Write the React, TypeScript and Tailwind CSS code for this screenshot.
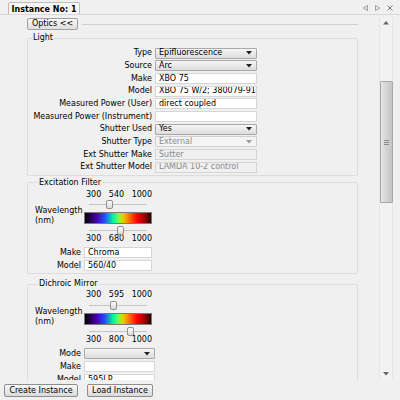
import React from 'react';

const font = { fontFamily: '"DejaVu Sans", Verdana, sans-serif' };

function Combo({ value, w = 'w-[102px]' }: { value: string; w?: string }) {
  return (
    <div
      className={`${w} flex h-[11px] items-center justify-between rounded-[1px] border border-[#a9a9a9] bg-gradient-to-b from-[#f6f6f6] to-[#dcdcdc] pl-[3px] pr-[4px] leading-none`}
    >
      <span>{value}</span>
      <svg width="6" height="4" viewBox="0 0 6 4">
        <path d="M0 0h6L3 3.5z" fill="#222" />
      </svg>
    </div>
  );
}

function DisabledCombo({ value }: { value: string }) {
  return (
    <div className="flex h-[11px] w-[102px] items-center justify-between rounded-[1px] border border-[#cfcfcf] bg-[#f4f4f4] pl-[3px] pr-[4px] leading-none text-[#8a8a8a]">
      <span>{value}</span>
      <svg width="6" height="4" viewBox="0 0 6 4">
        <path d="M0 0h6L3 3.5z" fill="#9a9a9a" />
      </svg>
    </div>
  );
}

function Field({
  value = '',
  disabled = false,
  w = 'w-[102px]',
}: {
  value?: string;
  disabled?: boolean;
  w?: string;
}) {
  return (
    <div
      className={`${w} flex h-[11px] items-center overflow-hidden whitespace-nowrap border pl-[3px] leading-none ${
        disabled
          ? 'border-[#d4d4d4] bg-[#f0f0f0] text-[#8a8a8a]'
          : 'border-[#d6d6d6] bg-white text-black'
      }`}
    >
      {value}
    </div>
  );
}

function LightRow({ label, children }: { label: string; children: React.ReactNode }) {
  return (
    <div className="flex h-[12.67px] items-center">
      <div className="w-[127px] whitespace-nowrap pr-[3px] text-right leading-none">{label}</div>
      {children}
    </div>
  );
}

function Slider({ pos }: { pos: number }) {
  return (
    <div className="relative mx-[5px] h-[9px]">
      <div className="absolute left-0 right-0 top-[4px] h-px bg-[#c4c4c4]" />
      <div
        className="absolute top-0 h-[9px] w-[7px] rounded-[2px] border border-[#8f8f8f] bg-gradient-to-b from-white to-[#d8d8d8]"
        style={{ left: `calc(${pos * 100}% - 3px)` }}
      />
    </div>
  );
}

function Spectrum() {
  return (
    <div className="h-[12px] border border-[#7a7a7a] bg-[linear-gradient(to_right,#000_0%,#2a0060_10%,#4a00b0_18%,#2050ff_30%,#00f0a0_42%,#60ff60_50%,#d0e000_56%,#ffa000_62%,#ff4800_71%,#ff0000_79%,#a00000_90%,#200000_100%)]" />
  );
}

function Numbers({ a, b, c, h = 'h-[10px]' }: { a: string; b: string; c: string; h?: string }) {
  return (
    <div className={`flex ${h} items-center justify-between pl-[2px] leading-none`}>
      <span>{a}</span>
      <span>{b}</span>
      <span>{c}</span>
    </div>
  );
}

function WavelengthBlock({ mid1, mid2, p1, p2 }: { mid1: string; mid2: string; p1: number; p2: number }) {
  return (
    <div className="flex">
      <div className="flex w-[50px] flex-col justify-center pl-[1px] leading-[10px]">
        <span>Wavelength</span>
        <span>(nm)</span>
      </div>
      <div className="flex w-[68px] flex-col">
        <Numbers a="300" b={mid1} c="1000" />
        <div className="mt-[0.5px]">
          <Slider pos={p1} />
        </div>
        <div className="mt-[3px]">
          <Spectrum />
        </div>
        <div className="mt-[2px]">
          <Slider pos={p2} />
        </div>
        <Numbers a="300" b={mid2} c="1000" h="h-[8px]" />
      </div>
    </div>
  );
}

function SmallRow({ label, children }: { label: string; children: React.ReactNode }) {
  return (
    <div className="flex h-[13px] items-center">
      <div className="w-[50px] pr-[3px] text-right leading-none">{label}</div>
      {children}
    </div>
  );
}

function Group({ title, children, className = '' }: { title: string; children: React.ReactNode; className?: string }) {
  return (
    <fieldset className={`rounded-[2px] border border-[#dcdcdc] ${className}`}>
      <legend className="ml-[4px] px-[1px] leading-none">{title}</legend>
      {children}
    </fieldset>
  );
}

function Button({ label, w }: { label: string; w: string }) {
  return (
    <button className={`${w} h-[13px] whitespace-nowrap rounded-[2px] border border-[#8e8e8e] bg-gradient-to-b from-[#f8f8f8] to-[#dadada] px-0 leading-none`}>
      {label}
    </button>
  );
}

export default function App() {
  return (
    <div className="flex h-[400px] w-[400px] flex-col overflow-hidden bg-[#f0f0f0] text-[8px] text-black" style={font}>
      {/* Tab bar */}
      <div className="flex h-[15px] items-end border-b border-[#d8d8d8] pl-[8px]">
        <div className="flex h-[12px] w-[72px] items-center justify-center rounded-t-[2px] border border-b-0 border-[#bdbdbd] bg-[#f7f7f7] pt-[2px] font-bold leading-none">
          Instance No: 1
        </div>
        <div className="flex-1" />
        <div className="mb-[3px] mr-[7px] flex items-center gap-[7px]">
          <svg width="5" height="6" viewBox="0 0 5 6">
            <path d="M4.5 0.5v5L0.5 3z" fill="none" stroke="#8a8a8a" strokeWidth="0.8" />
          </svg>
          <svg width="5" height="6" viewBox="0 0 5 6">
            <path d="M0.5 0.5v5L4.5 3z" fill="none" stroke="#8a8a8a" strokeWidth="0.8" />
          </svg>
          <svg width="6" height="6" viewBox="0 0 6 6">
            <path d="M0.5 0.5l5 5M5.5 0.5l-5 5" stroke="#7a7a7a" strokeWidth="1" />
          </svg>
        </div>
      </div>

      {/* Body */}
      <div className="flex h-[365px]">
        <div className="h-full w-[379px] overflow-hidden">
          <div className="flex items-center pl-[27px] pt-[3px]">
            <button className="h-[12px] w-[51px] rounded-[2px] border border-[#a0a0a0] bg-gradient-to-b from-[#f8f8f8] to-[#dedede] leading-none">
              Optics &lt;&lt;
            </button>
            <div className="ml-[4px] h-px w-[276px] bg-[#d0d0d0]" />
          </div>

          <div className="ml-[27px] mt-[4px] flex w-[331px] flex-col">
            <Group title="Light" className="pb-[1px] pt-[5px]">
              <div className="flex flex-col">
                <LightRow label="Type">
                  <Combo value="Epifluorescence" />
                </LightRow>
                <LightRow label="Source">
                  <Combo value="Arc" />
                </LightRow>
                <LightRow label="Make">
                  <Field value="XBO 75" />
                </LightRow>
                <LightRow label="Model">
                  <Field value="XBO 75 W/2; 380079-915" />
                </LightRow>
                <LightRow label="Measured Power (User)">
                  <Field value="direct coupled" />
                </LightRow>
                <LightRow label="Measured Power (Instrument)">
                  <Field />
                </LightRow>
                <LightRow label="Shutter Used">
                  <Combo value="Yes" />
                </LightRow>
                <LightRow label="Shutter Type">
                  <DisabledCombo value="External" />
                </LightRow>
                <LightRow label="Ext Shutter Make">
                  <Field value="Sutter" disabled />
                </LightRow>
                <LightRow label="Ext Shutter Model">
                  <Field value="LAMDA 10-2 control" disabled />
                </LightRow>
              </div>
            </Group>

            <Group title="Excitation Filter" className="mt-[3px] pb-[1px] pl-[6px]">
              <div className="pt-[3px]">
                <WavelengthBlock mid1="540" mid2="680" p1={0.343} p2={0.543} />
              </div>
              <div className="mt-[3px] flex flex-col">
                <SmallRow label="Make">
                  <Field value="Chroma" w="w-[68px]" />
                </SmallRow>
                <SmallRow label="Model">
                  <Field value="560/40" w="w-[68px]" />
                </SmallRow>
              </div>
            </Group>

            <Group title="Dichroic Mirror" className="mt-[6px] h-[120px] pl-[6px]">
              <div className="pt-[2px]">
                <WavelengthBlock mid1="595" mid2="800" p1={0.421} p2={0.714} />
              </div>
              <div className="mt-[3.5px] flex flex-col">
                <SmallRow label="Mode">
                  <Combo value="" w="w-[71px]" />
                </SmallRow>
                <SmallRow label="Make">
                  <Field w="w-[71px]" />
                </SmallRow>
                <SmallRow label="Model">
                  <Field value="595LP" w="w-[71px]" />
                </SmallRow>
              </div>
            </Group>
          </div>
        </div>

        {/* Scrollbar */}
        <div className="mt-[2px] flex h-[363px] w-[14px] flex-col items-center border-x border-[#e6e6e6] bg-[#f2f2f2]">
          <div className="flex h-[12px] items-center">
            <svg width="6" height="4" viewBox="0 0 6 4">
              <path d="M0 3.5h6L3 0z" fill="#666" />
            </svg>
          </div>
          <div className="mt-[52px] flex h-[122px] w-[13px] items-center justify-center rounded-[1px] border border-[#a8a8a8] bg-gradient-to-r from-[#e4e4e4] via-[#d4d4d4] to-[#c4c4c4]">
            <div className="flex flex-col gap-px">
              <div className="h-px w-[5px] bg-[#8a8a8a]" />
              <div className="h-px w-[5px] bg-[#8a8a8a]" />
              <div className="h-px w-[5px] bg-[#8a8a8a]" />
            </div>
          </div>
          <div className="flex-1" />
          <div className="flex h-[12px] items-center">
            <svg width="6" height="4" viewBox="0 0 6 4">
              <path d="M0 0h6L3 3.5z" fill="#666" />
            </svg>
          </div>
        </div>
      </div>

      {/* Bottom buttons */}
      <div className="flex gap-[9px] pl-[4px] pt-[4px]">
        <Button label="Create Instance" w="w-[74px]" />
        <Button label="Load Instance" w="w-[66px]" />
      </div>
    </div>
  );
}
